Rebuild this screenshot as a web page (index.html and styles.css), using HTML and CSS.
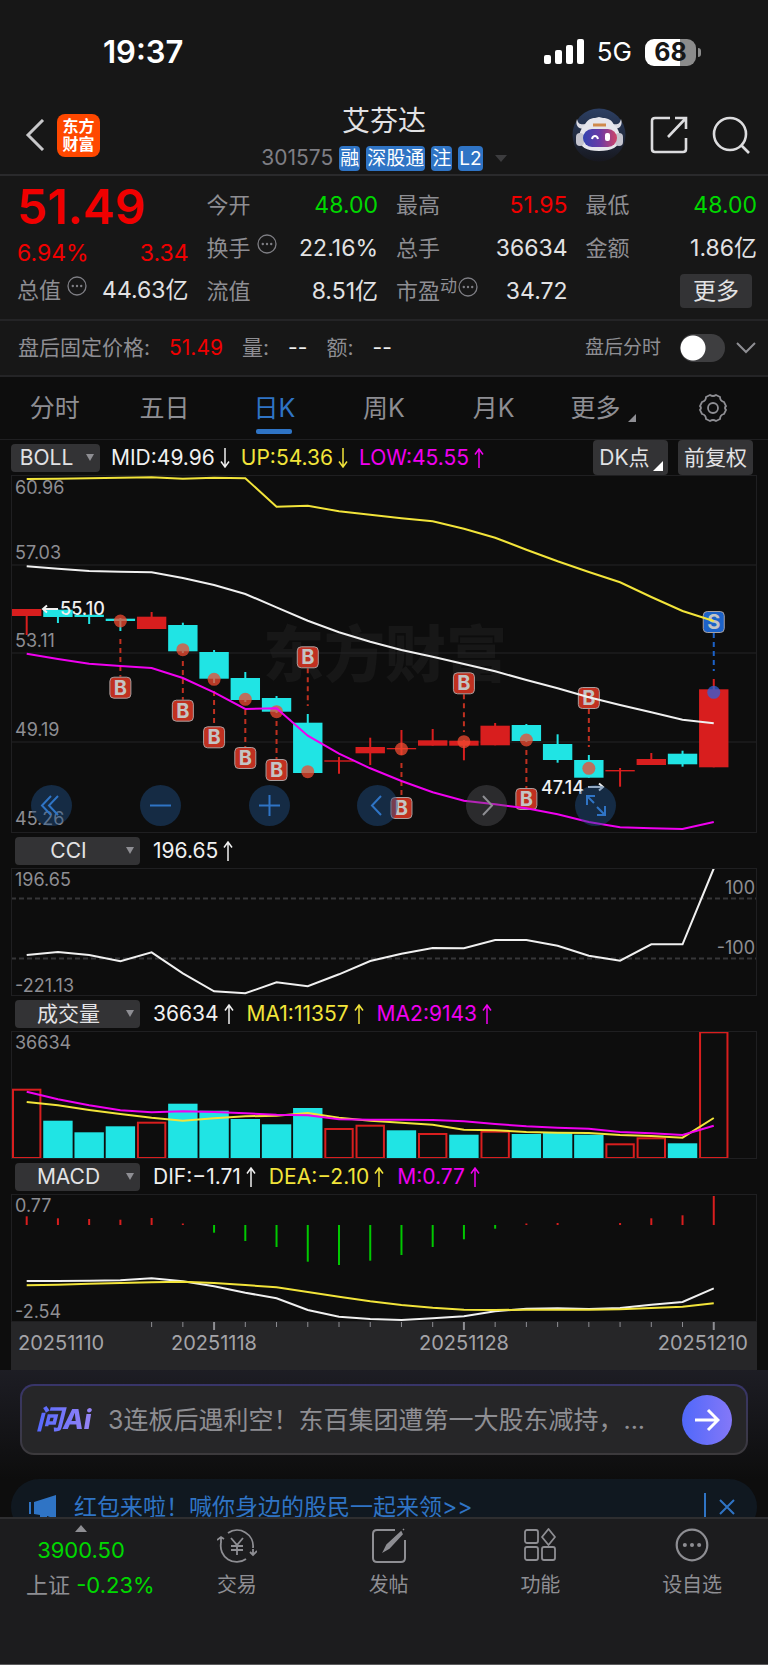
FILE: index.html
```
<!DOCTYPE html>
<html lang="zh-CN">
<head>
  <meta charset="UTF-8">
  <meta name="viewport" content="width=device-width, initial-scale=1">
  <title>艾芬达 301575</title>
  <link rel="stylesheet" href="styles.css">
</head>
<body>
  <svg class="defs" width="0" height="0" aria-hidden="true">
    <symbol id="down" viewBox="0 0 10 20"><path d="M5 0V19M1 13.500L5 19L9 13.500" fill="none" stroke="currentColor" stroke-width="1.500"/></symbol>
    <symbol id="up" viewBox="0 0 10 20"><path d="M5 20V1M1 6.500L5 1L9 6.500" fill="none" stroke="currentColor" stroke-width="1.500"/></symbol>
    <symbol id="dots" viewBox="0 0 20 20"><circle cx="10" cy="10" r="9" fill="none" stroke="currentColor" stroke-width="1.300"/><g fill="currentColor"><circle cx="5.800" cy="10" r="1.200"/><circle cx="10" cy="10" r="1.200"/><circle cx="14.200" cy="10" r="1.200"/></g></symbol>
  </svg>

  <div class="status">
    <span class="time">19:37</span>
    <div class="status-right">
      <svg width="40" height="26" viewBox="0 0 40 26" fill="#fff"><rect x="0" y="16" width="7" height="9" rx="2"/><rect x="11" y="11" width="7" height="14" rx="2"/><rect x="22" y="6" width="7" height="19" rx="2"/><rect x="33" y="0" width="7" height="25" rx="2"/></svg>
      <span class="net">5G</span>
      <span class="battery">68</span>
    </div>
  </div>

  <header class="header">
    <div class="header-left">
      <a href="#" class="back" aria-label="返回"><svg width="20" height="32" viewBox="0 0 20 32"><path d="M18 1L3 16L18 31" fill="none" stroke="#c8c8ca" stroke-width="3"/></svg></a>
      <a href="#" class="logo">东方<br>财富</a>
    </div>
    <div class="title">
      <h1>艾芬达</h1>
      <div class="sub">
        <span class="code">301575</span>
        <span class="tag">融</span><span class="tag">深股通</span><span class="tag">注</span><span class="tag">L2</span>
        <svg class="sub-arrow" width="12" height="7" viewBox="0 0 12 7"><path d="M0 0H12L6 7Z" fill="#3c3c3e"/></svg>
      </div>
    </div>
    <div class="header-right">
      <button type="button" aria-label="助手">
        <svg width="54" height="54" viewBox="0 0 54 54">
          <defs>
            <linearGradient id="bg" x1="0" y1="0" x2="0" y2="1"><stop offset="0" stop-color="#2c3f63"/><stop offset="1" stop-color="#17181f"/></linearGradient>
            <linearGradient id="visor"><stop offset="0" stop-color="#3344b0"/><stop offset=".5" stop-color="#6a3aa5"/><stop offset="1" stop-color="#d04468"/></linearGradient>
          </defs>
          <circle cx="27" cy="27" r="26.500" fill="url(#bg)"/>
          <path d="M5 11C6 16 9 17 13 16L18 12L12 21C6 21 3 17 5 11ZM49 11C48 16 45 17 41 16L36 12L42 21C48 21 51 17 49 11Z" fill="#dcdce4"/>
          <path d="M13 17C15 11 20 10 23 10L27 9L31 10C36 10 40 12 42 17C46 20 48 25 48 31C47 39 40 43 27 43C14 43 8 39 7 31C7 25 9 20 13 17Z" fill="#e6e6ec"/>
          <rect x="4" y="25" width="8" height="13" rx="4" fill="#c4c4ce"/><rect x="43" y="25" width="8" height="13" rx="4" fill="#c4c4ce"/>
          <path d="M21 17H34" stroke="#d08a4c" stroke-width="3"/>
          <rect x="11" y="21" width="34" height="18" rx="9" fill="url(#visor)"/>
          <path d="M20 31C21 27 25 27 26 31" fill="none" stroke="#fff" stroke-width="2"/><rect x="33" y="25" width="5" height="8" rx="2" fill="#fff"/>
        </svg>
      </button>
      <button type="button" aria-label="分享"><svg width="38" height="38" viewBox="0 0 38 38" fill="none" stroke="#dcdcde" stroke-width="2.600"><path d="M20 2H5Q2 2 2 5V33Q2 36 5 36H33Q36 36 36 33V22M25 2H36V13M36 2L18 21"/></svg></button>
      <button type="button" aria-label="搜索"><svg width="38" height="38" viewBox="0 0 38 38" fill="none" stroke="#dcdcde" stroke-width="2.600"><circle cx="18" cy="18" r="16"/><path d="M29 29L37 37"/></svg></button>
    </div>
  </header>

  <section class="quote">
    <div class="quote-main">
      <div class="price red">51.49</div>
      <div class="pair red"><span>6.94%</span><span>3.34</span></div>
      <div class="pair"><span class="label">总值<svg class="dots"><use href="#dots"/></svg></span><span>44.63亿</span></div>
    </div>
    <div class="quote-grid">
      <div class="pair"><span class="label">今开</span><span class="green">48.00</span></div>
      <div class="pair"><span class="label">最高</span><span class="red">51.95</span></div>
      <div class="pair"><span class="label">最低</span><span class="green">48.00</span></div>
      <div class="pair"><span class="label">换手<svg class="dots"><use href="#dots"/></svg></span><span>22.16%</span></div>
      <div class="pair"><span class="label">总手</span><span>36634</span></div>
      <div class="pair"><span class="label">金额</span><span>1.86亿</span></div>
      <div class="pair"><span class="label">流值</span><span>8.51亿</span></div>
      <div class="pair"><span class="label">市盈<sup>动</sup><svg class="dots near"><use href="#dots"/></svg></span><span>34.72</span></div>
      <div class="pair end"><button type="button" class="more">更多</button></div>
    </div>
  </section>

  <section class="after">
    <span>盘后固定价格:</span><span class="red">51.49</span>
    <span>量:</span><span class="white">--</span>
    <span>额:</span><span class="white">--</span>
    <label class="after-switch" for="after">盘后分时</label>
    <input type="checkbox" id="after" class="switch">
    <button type="button" aria-label="展开"><svg width="20" height="12" viewBox="0 0 20 12"><path d="M1 1L10 10L19 1" fill="none" stroke="#8e8e93" stroke-width="2"/></svg></button>
  </section>

  <nav class="tabs">
    <a href="#">分时</a>
    <a href="#">五日</a>
    <a href="#" class="active">日K</a>
    <a href="#">周K</a>
    <a href="#">月K</a>
    <a href="#" class="corner">更多</a>
    <a href="#" aria-label="设置"><svg width="30" height="30" viewBox="0 0 30 30" fill="none" stroke="#8e8e93" stroke-width="1.800"><path d="M12 2Q15 4 18 2L22 4Q22 8 26 9L28 13Q26 15 28 17L26 21Q22 22 22 26L18 28Q15 26 12 28L8 26Q8 22 4 21L2 17Q4 15 2 13L4 9Q8 8 8 4Z"/><circle cx="15" cy="15" r="5"/></svg></a>
  </nav>

  <main class="charts">
    <div class="bar top">
      <span class="pick small"><select aria-label="主图指标"><option>BOLL</option></select></span>
      <span class="white">MID:49.96<svg class="arr"><use href="#down"/></svg></span>
      <span class="yellow">UP:54.36<svg class="arr"><use href="#down"/></svg></span>
      <span class="pink">LOW:45.55<svg class="arr"><use href="#up"/></svg></span>
      <div class="bar-right">
        <button type="button" class="dk">DK点</button>
        <button type="button">前复权</button>
      </div>
    </div>
    <div class="main-chart">
      <svg id="kline" class="chart" viewBox="0 0 746 358"></svg>
      <div class="tools">
        <button type="button" aria-label="最早"><svg viewBox="0 0 41 41"><path d="M20 11L11 20.500L20 30M27 11L18 20.500L27 30"/></svg></button>
        <button type="button" aria-label="缩小"><svg viewBox="0 0 41 41"><path d="M10 20.500H31"/></svg></button>
        <button type="button" aria-label="放大"><svg viewBox="0 0 41 41"><path d="M10 20.500H31M20.500 10V31"/></svg></button>
        <button type="button" aria-label="前移"><svg viewBox="0 0 41 41"><path d="M24 11L15 20.500L24 30"/></svg></button>
        <button type="button" aria-label="后移" class="off"><svg viewBox="0 0 41 41"><path d="M17 11L26 20.500L17 30"/></svg></button>
        <button type="button" aria-label="全屏"><svg viewBox="0 0 41 41"><path d="M12 20V11H20M12 11L19 18M30 21V30H22M30 30L22 22"/></svg></button>
      </div>
    </div>

    <div class="bar">
      <span class="pick"><select aria-label="副图一"><option>CCI</option></select></span>
      <span class="white">196.65<svg class="arr"><use href="#up"/></svg></span>
    </div>
    <svg id="cci" class="chart" viewBox="0 0 746 128"></svg>

    <div class="bar">
      <span class="pick"><select aria-label="副图二"><option>成交量</option></select></span>
      <span class="white">36634<svg class="arr"><use href="#up"/></svg></span>
      <span class="yellow">MA1:11357<svg class="arr"><use href="#up"/></svg></span>
      <span class="pink">MA2:9143<svg class="arr"><use href="#up"/></svg></span>
    </div>
    <svg id="vol" class="chart" viewBox="0 0 746 128"></svg>

    <div class="bar">
      <span class="pick"><select aria-label="副图三"><option>MACD</option></select></span>
      <span class="white">DIF:−1.71<svg class="arr"><use href="#up"/></svg></span>
      <span class="yellow">DEA:−2.10<svg class="arr"><use href="#up"/></svg></span>
      <span class="pink">M:0.77<svg class="arr"><use href="#up"/></svg></span>
    </div>
    <svg id="macd" class="chart" viewBox="0 0 746 128"></svg>
    <svg id="axis" class="axis" viewBox="0 0 746 48"></svg>
  </main>

  <section class="ai">
    <div class="ai-box">
      <span class="ai-logo">问Ai</span>
      <p>3连板后遇利空！东百集团遭第一大股东减持，...</p>
      <button type="button" aria-label="提问"><svg width="26" height="26" viewBox="0 0 26 26"><path d="M1 13H24M14 3L24 13L14 23" fill="none" stroke="#fff" stroke-width="3"/></svg></button>
    </div>
  </section>

  <section class="promo">
    <div class="promo-box">
      <svg width="28" height="26" viewBox="0 0 28 26" fill="#2f74c5"><rect x="0" y="8" width="2" height="12"/><path d="M5 8L27 1V25L18 22V26H11V21L5 20Z"/></svg>
      <a href="#">红包来啦！喊你身边的股民一起来领&gt;&gt;</a>
      <button type="button" aria-label="关闭"><svg width="16" height="16" viewBox="0 0 16 16"><path d="M1 1L15 15M15 1L1 15" stroke="#2f74c5" stroke-width="2"/></svg></button>
    </div>
  </section>

  <footer class="bottom">
    <a href="#" class="index">
      <span class="index-price green"><svg width="12" height="7" viewBox="0 0 12 7"><path d="M0 7H12L6 0Z" fill="#8e8e93"/></svg>3900.50</span>
      <span>上证 <span class="green">-0.23%</span></span>
    </a>
    <a href="#"><svg width="40" height="36" viewBox="0 0 40 36" fill="none" stroke="#8e8e93" stroke-width="1.800"><path d="M11 5A16 16 0 0 1 36 20M36 27V21M40 23L36 27L33 24M29 31A16 16 0 0 1 4 15M4 10V15M0 12L4 9L7 11M14 10L20 17L26 10M20 17V27M14 18H26M14 22H26"/></svg>交易</a>
    <a href="#"><svg width="34" height="36" viewBox="0 0 34 36" fill="none" stroke="#8e8e93" stroke-width="2"><path d="M23 2H5Q1 2 1 6V30Q1 34 5 34H29Q33 34 33 30V12"/><path d="M12 23L15 17L29 4L30 6L17 20ZM31 2L32 1" fill="#8e8e93" stroke-width="1.600"/></svg>发帖</a>
    <a href="#"><svg width="32" height="34" viewBox="0 0 32 34" fill="none" stroke="#8e8e93" stroke-width="1.800"><rect x="1" y="2" width="13" height="13" rx="2"/><rect x="1" y="19" width="13" height="13" rx="2"/><rect x="18" y="19" width="13" height="13" rx="2"/><path d="M24.500 1L31 9L24.500 17L18 9Z" stroke-linejoin="round"/></svg>功能</a>
    <a href="#"><svg width="34" height="34" viewBox="0 0 20 20"><use href="#dots"/></svg>设自选</a>
  </footer>

  <script src="chart.js"></script>
</body>
</html>
```
FILE: styles.css
```
* {
  box-sizing: border-box;
}

body {
  margin: 0;
  background: #171717;
  color: #e2e2e4;
  font-family: Inter, "Noto Sans CJK SC", sans-serif;
  font-size: 22px;
  line-height: 28px;
}

a {
  color: inherit;
  text-decoration: none;
}

button,
select {
  font: inherit;
  color: inherit;
  border: 0;
  padding: 0;
  background: none;
}

svg {
  display: block;
  flex-shrink: 0;
}

.defs {
  position: absolute;
}

.red { color: #f00000; }
.green { color: #00d800; }
.white { color: #f0f0f0; }
.yellow { color: #f2e43a; }
.pink { color: #f000f0; }

/* status bar */
.status {
  display: flex;
  justify-content: space-between;
  align-items: center;
  height: 104px;
  padding: 0 72px 0 103px;
  color: #fff;
}

.time {
  font-size: 31px;
  font-weight: 600;
}

.status-right {
  display: flex;
  align-items: center;
  gap: 13px;
}

.net {
  font-size: 26px;
}

.battery {
  position: relative;
  width: 51px;
  height: 27px;
  border-radius: 9px;
  background: linear-gradient(90deg, #fff 68%, #8c8c8c 68%);
  color: #171717;
  font-size: 25px;
  font-weight: 700;
  line-height: 27px;
  text-align: center;
}

.battery::after {
  content: "";
  position: absolute;
  right: -5px;
  top: 9px;
  width: 3px;
  height: 9px;
  border-radius: 0 3px 3px 0;
  background: #8c8c8c;
}

/* header */
.header {
  display: grid;
  grid-template-columns: 1fr auto 1fr;
  height: 72px;
  padding: 0 18px;
  border-bottom: 2px solid #2a2a2c;
}

.header-left,
.header-right {
  display: flex;
  align-items: center;
  padding-bottom: 8px;
}

.header-left {
  gap: 12px;
  padding-left: 7px;
}

.header-right {
  justify-content: flex-end;
  gap: 24px;
}

.logo {
  width: 43px;
  height: 43px;
  border-radius: 8px;
  background: #ff4800;
  color: #fff;
  font-size: 16px;
  font-weight: 700;
  line-height: 18px;
  text-align: center;
  padding-top: 3px;
}

.title h1 {
  margin: 0;
  font-size: 28px;
  font-weight: 400;
  line-height: 34px;
  text-align: center;
}

.sub {
  display: flex;
  align-items: center;
  gap: 6px;
  padding-top: 6px;
}

.code {
  color: #7e7e84;
  font-size: 21px;
}

.tag {
  padding: 0 1px;
  border-radius: 4px;
  background: #2f74c5;
  color: #fff;
  font-size: 19px;
  line-height: 25px;
}

.sub-arrow {
  margin-left: 6px;
}

/* quote */
.quote {
  display: grid;
  grid-template-columns: repeat(4, 1fr);
  gap: 18px;
  padding: 7px 11px 7px 17px;
  border-bottom: 2px solid #242426;
}

.quote-grid {
  display: grid;
  grid-column: span 3;
  grid-template-columns: repeat(3, 1fr);
  column-gap: 18px;
}

.pair {
  display: flex;
  justify-content: space-between;
  align-items: center;
  height: 43px;
  font-size: 23px;
  white-space: nowrap;
}

.pair.end {
  justify-content: flex-end;
}

.price {
  height: 48px;
  font-size: 48px;
  font-weight: 600;
  line-height: 48px;
}

.quote-main .pair {
  height: 32px;
}

.quote-main .pair.red {
  height: 43px;
}

.label {
  display: flex;
  color: #8e8e93;
  font-size: 22px;
}

.label sup {
  font-size: 17px;
  line-height: 18px;
}

.dots {
  width: 20px;
  height: 20px;
  margin-left: 6px;
  color: #7e7e84;
}

.dots.near {
  margin-left: 1px;
}

.more {
  width: 72px;
  height: 34px;
  margin-right: 5px;
  border-radius: 4px;
  background: #333335;
}

/* after hours */
.after {
  display: flex;
  align-items: center;
  gap: 19px;
  height: 56px;
  padding: 0 12px 0 18px;
  border-bottom: 2px solid #242426;
  color: #8e8e93;
  font-size: 21px;
}

.after-switch {
  margin-left: auto;
  font-size: 19px;
}

.switch {
  appearance: none;
  width: 45px;
  height: 28px;
  margin: 0 -8px 0 0;
  border-radius: 14px;
  background: radial-gradient(circle at 13px 14px, #fff 12px, #3e3e40 13px);
}

/* tabs */
.tabs {
  display: grid;
  grid-template-columns: repeat(7, 1fr);
  height: 63px;
  background: #0d0d0d;
  border-bottom: 1px solid #1f1f21;
  color: #8e8e93;
  font-size: 25px;
}

.tabs a {
  position: relative;
  display: flex;
  justify-content: center;
  align-items: center;
}

.tabs .active {
  color: #2f74c5;
}

.tabs .active::after {
  content: "";
  position: absolute;
  bottom: 5px;
  width: 36px;
  height: 5px;
  border-radius: 2px;
  background: #2f74c5;
}

.corner::after {
  content: "";
  align-self: flex-end;
  margin: 0 0 17px 8px;
  border-left: 8px solid transparent;
  border-bottom: 8px solid #8e8e93;
}

/* charts */
.charts {
  padding: 0 11px;
  background: #0d0d0d;
}

.bar {
  display: flex;
  align-items: center;
  gap: 13px;
  height: 35px;
  padding-left: 4px;
  font-size: 21px;
  white-space: nowrap;
}

.bar > span {
  display: flex;
  align-items: center;
}

.bar.top {
  gap: 11px;
  padding: 0 4px 0 0;
}

.pick {
  position: relative;
}

.pick select {
  appearance: none;
  width: 125px;
  height: 28px;
  padding-right: 18px;
  border-radius: 4px;
  background: #333335;
  text-align: center;
  text-align-last: center;
}

.pick.small select {
  width: 89px;
}

.pick::after {
  content: "";
  position: absolute;
  right: 6px;
  top: 10px;
  border: 4px solid transparent;
  border-top: 7px solid #8e8e93;
  border-bottom: 0;
}

.arr {
  width: 10px;
  height: 20px;
  margin-left: 5px;
}

.bar-right {
  display: flex;
  gap: 10px;
  margin-left: auto;
}

.bar-right button {
  position: relative;
  width: 75px;
  height: 35px;
  border-radius: 4px;
  background: #333335;
}

.bar-right .dk {
  padding-right: 12px;
}

.dk::after {
  content: "";
  position: absolute;
  right: 5px;
  bottom: 4px;
  border-left: 10px solid transparent;
  border-bottom: 10px solid #fff;
}

.main-chart {
  position: relative;
}

.chart {
  width: 100%;
  outline: 1px solid #1f1f21;
  outline-offset: -1px;
}

.chart text {
  fill: #8e8e93;
  font-size: 18px;
}

.chart .watermark {
  fill: #171717;
  font-size: 61px;
  font-weight: 900;
}

.chart .peak {
  fill: #f0f0f0;
  font-size: 18px;
  font-weight: 500;
}

.chart .badge {
  fill: #c4c4c4;
  font-size: 20px;
  font-weight: 700;
  text-anchor: middle;
}

.line {
  fill: none;
  stroke-width: 2;
}

.axis {
  width: 100%;
  background: #262628;
}

.axis text {
  fill: #a4a4a8;
  font-size: 20px;
}

/* round buttons over the candles */
.tools {
  position: absolute;
  left: 20px;
  right: 141px;
  bottom: 7px;
  display: flex;
  justify-content: space-between;
}

.tools button {
  width: 41px;
  height: 41px;
  border-radius: 50%;
  background: rgba(32, 80, 136, 0.45);
}

.tools .off {
  background: rgba(90, 90, 94, 0.4);
}

.tools path {
  fill: none;
  stroke: #2f74c5;
  stroke-width: 2;
}

.tools .off path {
  stroke: #8e8e93;
}

/* ai question */
.ai {
  padding: 14px 20px 24px;
  background: linear-gradient(#1d1d24, #0d0d0d);
}

.ai-box {
  display: flex;
  align-items: center;
  height: 71px;
  padding: 0 14px;
  border: 2px solid transparent;
  border-radius: 14px;
  background: linear-gradient(#262628, #262628) padding-box, linear-gradient(#38356a, #3c3a3c) border-box;
}

.ai-logo {
  width: 72px;
  background: linear-gradient(90deg, #5468ff, #9a86f4 58px);
  background-clip: text;
  color: transparent;
  font-size: 27px;
  font-style: italic;
  font-weight: 800;
}

.ai-box p {
  flex: 1;
  margin: 0;
  overflow: hidden;
  color: #8e8e93;
  font-size: 25px;
  line-height: 34px;
  white-space: nowrap;
}

.ai-box button {
  display: flex;
  align-items: center;
  justify-content: center;
  width: 50px;
  height: 50px;
  border-radius: 50%;
  background: linear-gradient(90deg, #5068fa, #8478f8);
}

/* promo strip, cut off by the bottom bar */
.promo {
  height: 38px;
  padding: 0 11px;
  overflow: hidden;
  background: #0d0d0d;
}

.promo-box {
  display: flex;
  align-items: center;
  height: 56px;
  padding: 0 22px 0 18px;
  border-radius: 28px;
  background: #101820;
  color: #2f74c5;
  font-size: 23px;
}

.promo-box a {
  flex: 1;
  margin-left: 17px;
}

.promo-box button {
  padding: 6px 0 6px 13px;
  border-left: 2px solid #2f74c5;
}

/* bottom bar */
.bottom {
  display: grid;
  grid-template-columns: 161px repeat(4, 1fr);
  height: 148px;
  border-top: 2px solid #2e2e30;
  border-bottom: 1px solid #5a5a5c;
  background: #1c1c1e;
  color: #8e8e93;
  font-size: 20px;
}

.bottom a {
  display: flex;
  flex-direction: column;
  align-items: center;
  height: 80px;
  padding-top: 9px;
}

.bottom a > svg {
  margin-bottom: auto;
}

.bottom .index {
  align-items: flex-start;
  justify-content: space-between;
  padding: 6px 0 0 26px;
  font-size: 22px;
  white-space: nowrap;
}

.index-price {
  width: 110px;
  text-align: center;
}

.index-price svg {
  margin: 0 auto 4px;
}
```
FILE: chart.js
```
const RED = '#d81e1e';
const CYAN = '#20e4e4';
const YELLOW = '#f2e43a';
const PINK = '#f000f0';
const WHITE = '#f0f0f0';
const GREEN = '#00c800';

const x = i => 15.7 + i * 31.23;

// [color, top, bottom, high, low]
const candles = [
  ['r', 134, 141, 134, 160], ['c', 134.7, 142, 134.7, 148], ['c', 139.7, 142, 139.7, 149],
  ['c', 143.7, 146, 143, 156], ['r', 141.7, 154, 137, 154], ['c', 150, 176.3, 147.7, 178],
  ['c', 177, 203.7, 175, 208], ['c', 203, 225, 197, 227], ['c', 223, 236.7, 221, 238],
  ['c', 247.7, 298, 239, 298], ['r', 285.3, 286.7, 282, 298.7], ['r', 272, 278.3, 262.7, 290],
  ['r', 273, 274.3, 255, 280], ['r', 265.3, 270.7, 254, 270.7], ['r', 265.7, 270.7, 265, 285.3],
  ['r', 250.7, 270.3, 248, 270.3], ['c', 250, 266, 249, 267], ['c', 269, 285, 259.3, 287.7],
  ['c', 285, 302.7, 280, 302.7], ['r', 295, 296.4, 293, 311.7], ['r', 284, 290, 278, 290],
  ['c', 278.7, 289.3, 275.7, 291.7], ['r', 214.3, 292.3, 204, 292.3]
];

const boll = {
  up: [4, 3.7, 3.3, 2.7, 2.3, 3.7, 2.7, 3.3, 31.7, 30.7, 36.3, 39.7, 43.3, 46.3, 53.7, 62.7, 74.7, 86.3, 97, 107.3, 122, 136, 149.3],
  mid: [91.3, 93.7, 96, 96.7, 97.3, 103, 110, 119, 132.3, 145.7, 157.3, 166.7, 175, 181.7, 189, 196.3, 205, 213.3, 222.3, 230, 237.3, 244.7, 248.3],
  low: [178.7, 184, 188.7, 191, 193, 203, 217.3, 234, 233.3, 260.7, 278.7, 293.3, 306, 317.3, 325.7, 329.3, 333.3, 339.3, 347, 352.3, 353.3, 354, 347]
};

// [day, badge y, dot y, letter]
const marks = [
  [3, 212.7, 146, 'B'], [5, 235.7, 174.7, 'B'], [6, 262.3, 204.3, 'B'], [7, 283, 224.3, 'B'],
  [8, 295, 236.7, 'B'], [9, 182.3, 296.7, 'B'], [12, 333, 274, 'B'], [14, 208.3, 266.7, 'B'],
  [16, 324, 265, 'B'], [18, 223, 293.3, 'B'], [22, 147, 217.3, 'S']
];

const cci = [87, 84, 87, 93.3, 84.3, 105.3, 123.3, 125.3, 114.3, 118.3, 106.3, 93, 85.7, 80, 80.3, 72, 72, 77.7, 87.7, 92.7, 76.3, 76.3, 0.5];

const vol = [58.7, 89.7, 101.3, 95.3, 91.7, 72.7, 79.7, 88, 93.3, 77, 98, 94.7, 99.3, 103, 103.7, 100.7, 103, 102, 103.7, 113.3, 107.3, 112.3, 1.3];
const volUp = [0, 4, 10, 11, 13, 15, 19, 20, 22];
const ma1 = [71, 74.3, 79, 83, 86.7, 89.7, 87.3, 85.3, 84.7, 82, 86.7, 89.7, 91.7, 93.7, 98.7, 99.3, 101, 101.7, 102, 104, 105, 106.7, 87];
const ma2 = [60.7, 68.3, 74.3, 79.3, 81.3, 80.3, 81, 82.3, 83.7, 84.3, 88.3, 88.7, 88.7, 89, 90.3, 93, 95.3, 96.7, 97.7, 101, 102.3, 104, 94.7];

const macd = [22.3, 24.3, 25, 25.7, 24, 29.5, 38.7, 47, 53, 67.7, 71, 66.7, 61, 53, 45.3, 34.7, 29.5, 29, 31, 29, 24.3, 21.3, 2];
const dif = [87, 87, 86.7, 86.3, 84.3, 87.3, 92.3, 98.7, 104.3, 116, 122.7, 125, 126, 124.3, 122.3, 117.3, 114.7, 114.3, 115, 114, 110.7, 108, 94.3];
const dea = [91.3, 90.7, 89.7, 89, 88.3, 87.7, 89, 91, 93.3, 98, 102.7, 107.3, 111, 113.7, 115.7, 116, 115.7, 115.7, 115.7, 115.3, 114, 112.7, 109.3];

function line(values, color) {
  const points = values.map((v, i) => x(i) + ',' + v).join(' ');
  return `<polyline class="line" points="${points}" stroke="${color}"/>`;
}

function seg(x1, y1, x2, y2, color, width, dash) {
  return `<line x1="${x1}" y1="${y1}" x2="${x2}" y2="${y2}" stroke="${color}" stroke-width="${width}" stroke-dasharray="${dash || 'none'}"/>`;
}

function text(tx, ty, str, cls, anchor) {
  return `<text x="${tx}" y="${ty}" class="${cls || ''}" text-anchor="${anchor || 'start'}">${str}</text>`;
}

function drawKline() {
  let s = text(252, 202, '东方财富', 'watermark');
  [90, 178, 267].forEach(y => { s += seg(0, y, 746, y, '#242426', 1); });
  s += text(4, 19, '60.96') + text(4, 84, '57.03') + text(4, 172, '53.11') + text(4, 261, '49.19') + text(4, 350, '45.26');
  candles.forEach(([c, top, bottom, high, low], i) => {
    const color = c === 'r' ? RED : CYAN;
    s += seg(x(i), high, x(i), low, color, 2);
    s += `<rect x="${x(i) - 14.7}" y="${top}" width="29.4" height="${bottom - top}" fill="${color}"/>`;
  });
  marks.forEach(([i, by, dy, letter]) => {
    const color = letter === 'S' ? '#1c62c8' : '#c03020';
    const above = by < dy;
    const from = above ? candles[i][3] - 8 : candles[i][4] + 8;
    s += seg(x(i), above ? by + 11 : from, x(i), above ? from : by - 11, color, 2, '5 4');
    s += `<rect x="${x(i) - 10.5}" y="${by - 10.5}" width="21" height="21" rx="4" fill="${color}" stroke="#a8a0a0"/>`;
    s += text(x(i), by + 7, letter, 'badge', 'middle');
    s += `<circle cx="${x(i)}" cy="${dy}" r="6.500" fill="${letter === 'S' ? '#2f62dc' : '#f04a30'}" opacity=".75"/>`;
  });
  s += line(boll.up.slice(0, 22).concat(146), YELLOW) + line(boll.mid, WHITE) + line(boll.low, PINK);
  s += seg(32, 134, 47, 134, WHITE, 2) + `<path d="M36 130.500L32 134L36 137.500" fill="none" stroke="${WHITE}" stroke-width="2"/>`;
  s += text(49, 140, '55.10', 'peak');
  s += text(530, 319, '47.14', 'peak');
  s += seg(577, 312, 592, 312, WHITE, 2) + `<path d="M588 308.500L592 312L588 315.500" fill="none" stroke="${WHITE}" stroke-width="2"/>`;
  document.getElementById('kline').innerHTML = s;
}

function drawCci() {
  let s = seg(0, 30.5, 746, 30.5, '#363638', 2, '5 3') + seg(0, 90.5, 746, 90.5, '#363638', 2, '5 3');
  s += text(4, 18, '196.65') + text(4, 124, '-221.13');
  s += text(744, 26, '100', '', 'end') + text(744, 86, '-100', '', 'end');
  s += line(cci, WHITE);
  document.getElementById('cci').innerHTML = s;
}

function drawVol() {
  let s = text(4, 18, '36634');
  vol.forEach((y, i) => {
    if (volUp.includes(i)) {
      s += `<rect x="${x(i) - 13.7}" y="${y}" width="27.4" height="${127 - y}" fill="none" stroke="${RED}" stroke-width="2"/>`;
    } else {
      s += `<rect x="${x(i) - 14.7}" y="${y}" width="29.4" height="${128 - y}" fill="${CYAN}"/>`;
    }
  });
  s += line(ma1, YELLOW) + line(ma2, PINK);
  document.getElementById('vol').innerHTML = s;
}

function drawMacd() {
  let s = text(4, 18, '0.77') + text(4, 124, '-2.54');
  macd.forEach((y, i) => {
    s += seg(x(i), 31, x(i), y, y > 31 ? GREEN : RED, 2);
  });
  s += line(dif, WHITE) + line(dea, YELLOW);
  document.getElementById('macd').innerHTML = s;
}

function drawAxis() {
  let s = '';
  for (let i = 4; i < 23; i++) {
    const big = i === 6 || i === 14 || i === 22;
    s += seg(x(i), 0, x(i), big ? 8 : 5, '#8e8e93', big ? 2 : 1);
  }
  s += text(7, 28, '20251110') + text(203, 28, '20251118', '', 'middle');
  s += text(453, 28, '20251128', '', 'middle') + text(737, 28, '20251210', '', 'end');
  document.getElementById('axis').innerHTML = s;
}

drawKline();
drawCci();
drawVol();
drawMacd();
drawAxis();
```
